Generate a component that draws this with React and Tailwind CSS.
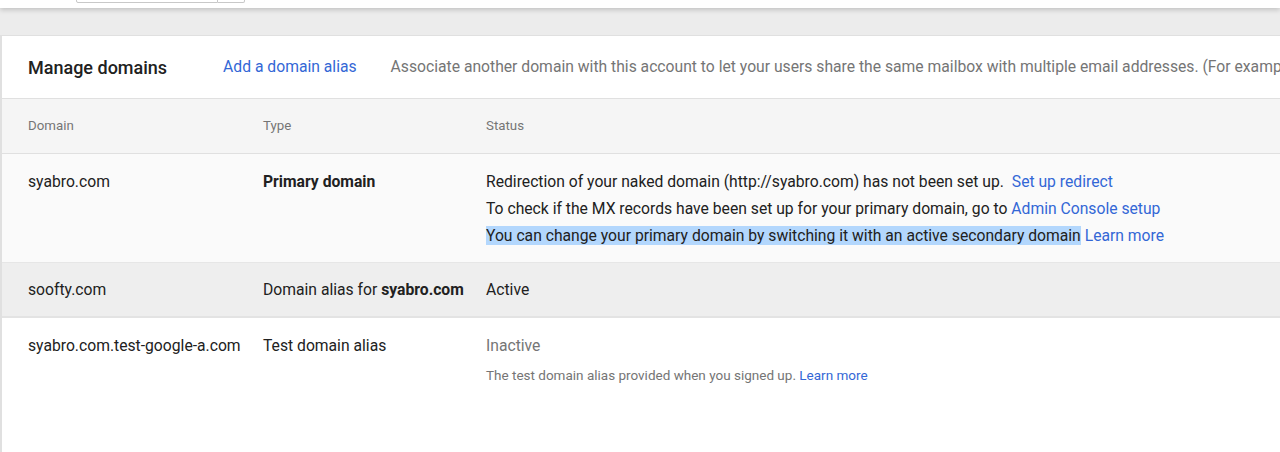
export default function App() {
  return (
    <div className="h-[452px] w-[1280px] overflow-hidden bg-[#ececec] font-['Roboto',sans-serif] text-[#212121]">
      {/* top bar */}
      <div className="relative h-[8px] bg-white shadow-[0_2px_5px_rgba(0,0,0,0.18)]">
        <div className="absolute left-[76px] top-[-20px] flex h-[23px]">
          <div className="w-[142px] rounded-bl-[2px] border border-[#c8c8c8]" />
          <div className="w-[27px] rounded-br-[2px] border border-l-0 border-[#c8c8c8]" />
        </div>
      </div>

      <div className="mt-[27px] border-l-2 border-t border-[#e0e0e0] bg-white">
        {/* card header */}
        <div className="flex h-[63px] items-center overflow-hidden whitespace-nowrap border-b border-[#e0e0e0] pl-[26px]">
          <h2 className="text-[18px] font-medium text-[#212121]">Manage domains</h2>
          <a className="ml-[56px] text-[15.7px] text-[#3367d6]">Add a domain alias</a>
          <p className="ml-[34px] text-[15.7px] text-[#757575]">
            Associate another domain with this account to let your users share the same mailbox with multiple email addresses. (For example
          </p>
        </div>

        {/* table header */}
        <div className="flex h-[55px] items-center border-b border-[#e0e0e0] bg-[#f5f5f5] text-[13.3px] text-[#757575]">
          <div className="w-[261px] pl-[26px]">Domain</div>
          <div className="w-[223px]">Type</div>
          <div>Status</div>
        </div>

        {/* row 1 */}
        <div className="flex border-b border-[#e6e6e6] bg-[#fafafa] pb-[13px] pt-[14px] text-[15.7px] leading-[27px]">
          <div className="w-[261px] pl-[26px]">syabro.com</div>
          <div className="w-[223px] font-bold">Primary domain</div>
          <div className="whitespace-nowrap">
            <div>
              Redirection of your naked domain (http://syabro.com) has not been set up.{' '}
              <a className="ml-[4px] text-[#3367d6]">Set up redirect</a>
            </div>
            <div>
              To check if the MX records have been set up for your primary domain, go to{' '}
              <a className="text-[#3367d6]">Admin Console setup</a>
            </div>
            <div>
              <span className="bg-[#b3d7fd]">You can change your primary domain by switching it with an active secondary domain</span>{' '}
              <a className="text-[#3367d6]">Learn more</a>
            </div>
          </div>
        </div>

        {/* row 2 */}
        <div className="flex h-[55px] items-center border-b-2 border-[#e3e3e3] bg-[#eeeeee] text-[15.7px]">
          <div className="w-[261px] pl-[26px]">soofty.com</div>
          <div className="w-[223px] whitespace-nowrap">
            Domain alias for <span className="font-bold">syabro.com</span>
          </div>
          <div>Active</div>
        </div>

        {/* row 3 */}
        <div className="flex h-[140px] bg-white pt-[14px]">
          <div className="w-[261px] whitespace-nowrap pl-[26px] text-[15.7px] leading-[27px]">syabro.com.test-google-a.com</div>
          <div className="w-[223px] text-[15.7px] leading-[27px]">Test domain alias</div>
          <div>
            <div className="text-[15.7px] leading-[27px] text-[#757575]">Inactive</div>
            <div className="mt-[6px] text-[13.5px] text-[#757575]">
              The test domain alias provided when you signed up.{' '}
              <a className="text-[#3367d6]">Learn more</a>
            </div>
          </div>
        </div>
      </div>
    </div>
  )
}
